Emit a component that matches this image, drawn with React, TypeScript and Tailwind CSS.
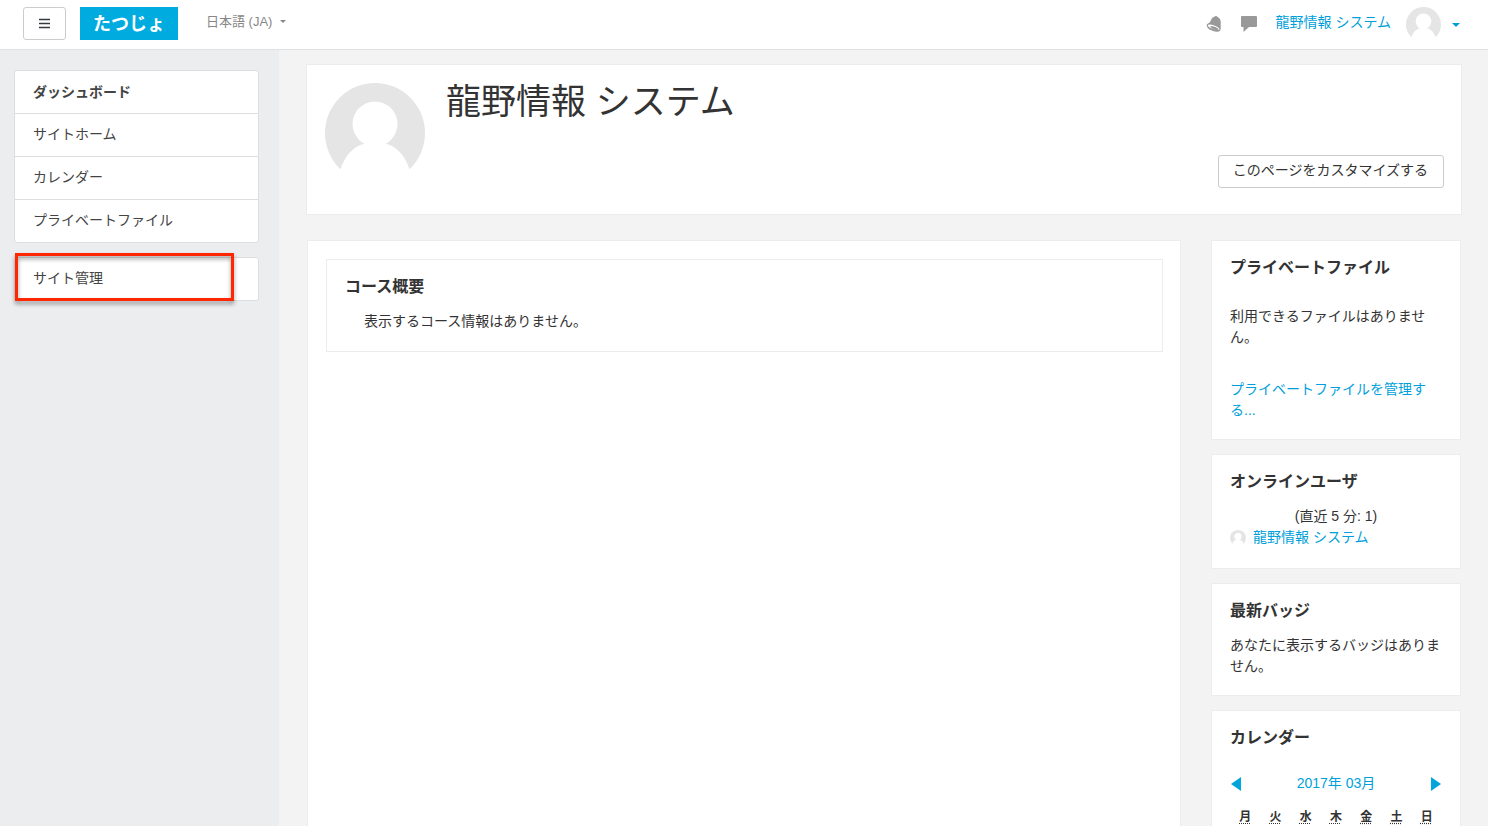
import React from 'react';

const navItems = ['ダッシュボード', 'サイトホーム', 'カレンダー', 'プライベートファイル'];
const weekdays = ['月', '火', '水', '木', '金', '土', '日'];

function Avatar({className}: { className: string }) {
    return (
        <svg className={"shrink-0 " + className} viewBox="0 0 100 100" aria-hidden="true">
            <circle cx="50" cy="50" r="50" fill="#e5e5e5"/>
            <circle cx="50" cy="41" r="22.5" fill="#fff"/>
            <path d="M15.5 86.5C20 72 29 63 40 60.5H60C71 63 80 72 84.5 86.5L80 101H20Z" fill="#fff"/>
        </svg>
    );
}

function BellIcon() {
    return (
        <svg className="w-4 h-4" viewBox="0 0 16 16" aria-hidden="true">
            <path
                d="M8.8.4C9.5-.3 11.1-.1 11.4.9C13.4 1.6 14.7 3.4 14.7 5.6V12.6C14.7 13.4 14 13.5 13.3 13L1.2 9.2C.6 8.9.7 8.4 1.3 8.1C3.8 6.8 4.7 5 5.4 3.2C6.1 1.6 7.4.8 8.8.4Z"
                fill="#999"/>
            <ellipse cx="7.6" cy="11.7" rx="7.2" ry="3.3" transform="rotate(20 7.6 11.7)" fill="#999"/>
            <ellipse cx="7.6" cy="11.3" rx="6.2" ry="1.9" transform="rotate(20 7.6 11.3)" fill="#fff"/>
            <path d="M4.4 10C7.5 10.1 11.5 11.6 13 13.6C10.4 14.8 5.2 13.4 4.4 10Z" fill="#999"/>
        </svg>
    );
}

function CommentIcon() {
    return (
        <svg className="w-4 h-4" viewBox="0 0 16 16" aria-hidden="true">
            <path d="M1 0H15Q16 0 16 1V10Q16 11 15 11H8L2.5 16V11H1Q0 11 0 10V1Q0 0 1 0Z" fill="#999"/>
        </svg>
    );
}

function Caret({className}: { className: string }) {
    return (
        <svg className={className} viewBox="0 0 8 4" aria-hidden="true">
            <path d="M0 0H8L4 4Z" fill="currentColor"/>
        </svg>
    );
}

function TopBar() {
    return (
        <header className="flex items-start h-[50px] shrink-0 pt-[7px] pl-[23px] pr-7 bg-white border-b border-[#dfe1e3]">
            <button type="button" aria-label="メニュー"
                    className="flex items-center justify-center w-[43px] h-[33px] border border-[#ccc] rounded-[3px] bg-white">
                <svg className="w-[11px] h-[11px]" viewBox="0 0 11 11" aria-hidden="true">
                    <path d="M0 1.5H11M0 5.5H11M0 9.5H11" stroke="#373a3c" strokeWidth="1.6"/>
                </svg>
            </button>
            <a href="#" className="flex items-center justify-center w-[98px] h-[33px] ml-[14px] bg-[#00acdf] text-white text-lg font-bold">
                たつじょ
            </a>
            <button type="button" className="flex items-center gap-2 h-[29px] ml-7 text-[13px] text-[#888]">
                日本語 (JA)
                <Caret className="w-1.5 h-[3px]"/>
            </button>
            <div className="flex items-center ml-auto">
                <button type="button" aria-label="通知" className="pb-0.5"><BellIcon/></button>
                <button type="button" aria-label="メッセージ" className="ml-[19px] pb-0.5"><CommentIcon/></button>
                <button type="button" className="flex items-center ml-[19px] text-[#009fdb]">
                    <span className="pb-1">龍野情報 システム</span>
                    <Avatar className="w-[35px] h-[35px] ml-[15px] mr-[11px]"/>
                    <Caret className="w-2 h-1"/>
                </button>
            </div>
        </header>
    );
}

function Sidebar() {
    return (
        <nav className="w-[279px] shrink-0 pt-5 pl-[14px] pr-5 bg-[#ebedef] text-[#444]">
            <ul className="border border-[#dcdee0] rounded-[3px] bg-white">
                {navItems.map((item, idx) =>
                    <li key={item} className={idx > 0 ? "border-t border-[#dcdee0]" : ""}>
                        <a href="#" className={"flex items-center h-[42px] px-[18px] " + (idx === 0 ? "font-bold" : "pb-px")}>{item}</a>
                    </li>
                )}
            </ul>
            <div className="relative mt-[14px] border border-[#dcdee0] rounded-[3px] bg-white">
                <a href="#" className="flex items-center h-[42px] px-[18px] pb-px">サイト管理</a>
                <div className="absolute left-0 -top-[5px] w-[219px] h-12 border-3 border-[#ff2600] pointer-events-none drop-shadow-[0_3px_2px_rgba(0,0,0,0.4)]"/>
            </div>
        </nav>
    );
}

function Block({title, className = "", children}: { title: string, className?: string, children: React.ReactNode }) {
    return (
        <section className={"border border-[#ececec] bg-white px-[18px] pt-[18px] " + className}>
            <h2 className="text-base leading-[17px] font-bold">{title}</h2>
            {children}
        </section>
    );
}

function Calendar() {
    return (
        <>
            <div className="flex items-center justify-between mt-[27px] px-px text-[#009fdb]">
                <button type="button" aria-label="前月">
                    <svg className="w-[10px] h-[14px]" viewBox="0 0 10 14"><path d="M10 0V14L0 7Z" fill="#00a5dc"/></svg>
                </button>
                <a href="#">2017年 03月</a>
                <button type="button" aria-label="翌月">
                    <svg className="w-[10px] h-[14px]" viewBox="0 0 10 14"><path d="M0 0V14L10 7Z" fill="#00a5dc"/></svg>
                </button>
            </div>
            <table className="w-full mt-[13px] table-fixed text-xs leading-5">
                <thead>
                <tr>
                    {weekdays.map(day =>
                        <th key={day} scope="col" className="p-0 text-center font-bold">
                            <abbr className="underline decoration-dotted underline-offset-2">{day}</abbr>
                        </th>
                    )}
                </tr>
                </thead>
            </table>
        </>
    );
}

function App() {
    return (
        <div
            className="flex flex-col h-screen overflow-hidden bg-[#f3f3f3] text-[#333] text-sm leading-[21px] font-['Liberation_Sans','Noto_Sans_CJK_JP',sans-serif]"
            lang="ja">
            <TopBar/>
            <div className="flex flex-1 min-h-0">
                <Sidebar/>
                <div className="flex flex-col flex-1 min-w-0 pt-[14px] pl-[27px] pr-[26px]">
                    <div className="flex items-start py-[18px] pl-[18px] pr-[17px] border border-[#ececec] bg-white">
                        <Avatar className="w-[100px] h-[100px] mb-[13px]"/>
                        <h1 className="ml-[21px] text-[35px] leading-[38px]">龍野情報 システム</h1>
                        <button type="button"
                                className="ml-auto mt-[72px] h-[33px] pl-[14px] pr-[15px] pb-0.5 border border-[#ccc] rounded-[3px] bg-white">
                            このページをカスタマイズする
                        </button>
                    </div>
                    <div className="flex flex-1 min-h-0 gap-[30px] mt-[25px] px-px">
                        <main className="flex-1 min-w-0 border border-b-0 border-[#ececec] bg-white py-[18px] pl-[18px] pr-[17px]">
                            <Block title="コース概要" className="pb-[19px]">
                                <p className="mt-4 px-[19px]">表示するコース情報はありません。</p>
                            </Block>
                        </main>
                        <aside className="flex flex-col gap-[14px] w-[250px] shrink-0">
                            <Block title="プライベートファイル" className="pb-[18px]">
                                <p className="mt-[30px]">利用できるファイルはありません。</p>
                                <a href="#" className="block mt-[31px] text-[#009fdb]">プライベートファイルを管理する...</a>
                            </Block>
                            <Block title="オンラインユーザ" className="pb-5">
                                <p className="mt-4 text-center">(直近 5 分: 1)</p>
                                <a href="#" className="flex items-center gap-[7px] text-[#009fdb]">
                                    <Avatar className="w-4 h-4"/>
                                    龍野情報 システム
                                </a>
                            </Block>
                            <Block title="最新バッジ" className="pb-[18px]">
                                <p className="mt-4">あなたに表示するバッジはありません。</p>
                            </Block>
                            <Block title="カレンダー" className="flex-1 border-b-0">
                                <Calendar/>
                            </Block>
                        </aside>
                    </div>
                </div>
            </div>
        </div>
    );
}

export default App;
